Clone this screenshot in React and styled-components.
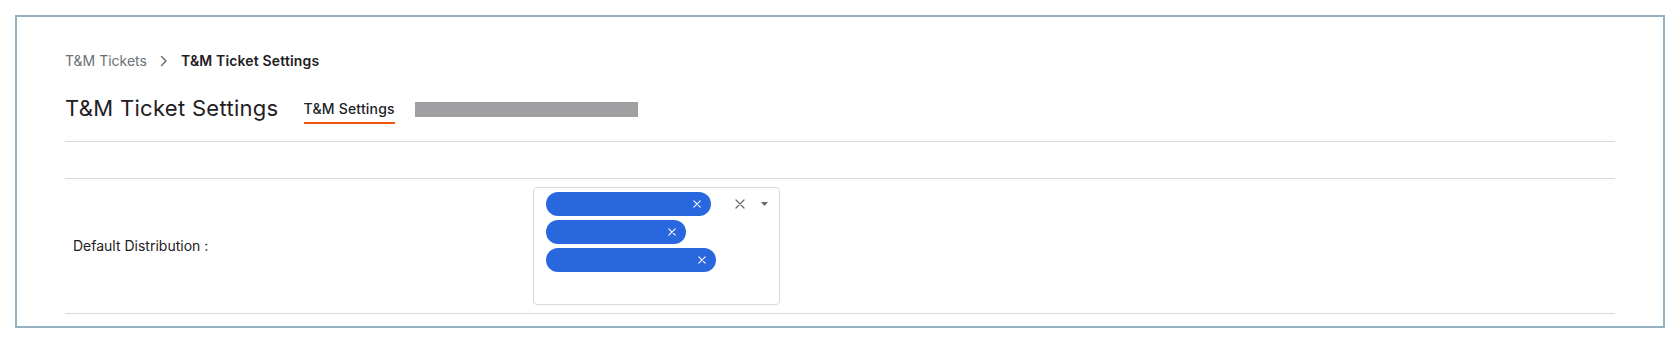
import React from 'react';
import styled, { createGlobalStyle } from 'styled-components';

const GlobalStyle = createGlobalStyle`
  body {
    margin: 0;
    background: #ffffff;
    font-family: Inter, "Noto Sans", "Liberation Sans", sans-serif;
    color: #222326;
  }
`

const Frame = styled.div`
  margin: 15px;
  border: 2px solid #93b1c0;
  padding: 34px 48px 12px 48px;
  height: 313px;
  box-sizing: border-box;
`

const Breadcrumb = styled.div`
  display: flex;
  align-items: center;
  font-size: 14px;
  line-height: 20px;
  height: 20px;
`

const CrumbLink = styled.span`
  color: #697077;
`

const CrumbChevron = styled.span`
  display: flex;
  margin: 0 13px 0 13px;
  color: #697077;
`

const CrumbCurrent = styled.span`
  font-weight: 600;
  color: #1f2023;
  letter-spacing: 0.15px;
`

const HeaderRow = styled.div`
  display: flex;
  align-items: flex-start;
  margin-top: 23px;
`

const Title = styled.h1`
  margin: 0;
  font-size: 22px;
  line-height: 28px;
  font-weight: 400;
  color: #1f2023;
  letter-spacing: 0.3px;
`

const Tab = styled.div`
  margin-left: 25px;
  margin-top: 5px;
  font-size: 14px;
  line-height: 20px;
  font-weight: 500;
  letter-spacing: 0.2px;
  padding-bottom: 3px;
  border-bottom: 2px solid ${props => props.active ? '#f0560d' : 'transparent'};
  color: #222326;
`

const Redacted = styled.div`
  margin-left: 20px;
  margin-top: 8px;
  width: 223px;
  height: 15px;
  background: #a0a0a2;
`

const Table = styled.div`
  margin-top: 17px;
  border-bottom: 1px solid #d9d9d9;
`

const Row = styled.div`
  display: grid;
  grid-template-columns: 468px 1fr;
  align-items: center;
  border-top: 1px solid #d9d9d9;
  min-height: ${props => props.empty ? '36px' : 'auto'};
  padding: ${props => props.empty ? '0' : '8px 0'};
`

const Label = styled.div`
  padding-left: 8px;
  font-size: 14px;
  line-height: 20px;
  color: #1f2023;
`

const Select = styled.div`
  width: 247px;
  height: 118px;
  box-sizing: border-box;
  border: 1px solid #d9d9d9;
  border-radius: 4px;
  padding: 4px 11px 0 12px;
  display: flex;
  align-items: flex-start;
`

const ChipList = styled.div`
  flex: 1;
  display: flex;
  flex-direction: column;
  align-items: flex-start;
  gap: 4px;
`

const Chip = styled.div`
  width: ${props => props.w}px;
  height: 24px;
  border-radius: 12px;
  background: #2967df;
  display: flex;
  align-items: center;
  justify-content: flex-end;
  padding-right: 10px;
  box-sizing: border-box;
`

const Indicators = styled.div`
  display: flex;
  align-items: center;
  height: 24px;
  gap: 16px;
`

const Cross = ({ size, color, width }) => (
  <svg width={size} height={size} viewBox="0 0 10 10">
    <path d="M1 1 L9 9 M9 1 L1 9" stroke={color} strokeWidth={width} strokeLinecap="round" />
  </svg>
)

const Caret = () => (
  <svg width="7" height="4" viewBox="0 0 7 4">
    <path d="M0 0 L7 0 L3.5 4 Z" fill="#666a70" />
  </svg>
)

const Chevron = () => (
  <svg width="8" height="12" viewBox="0 0 8 12">
    <path d="M1.5 1.5 L6 6 L1.5 10.5" stroke="#697077" strokeWidth="1.5" fill="none" strokeLinecap="round" strokeLinejoin="round" />
  </svg>
)

const chips = [165, 140, 170];

const App = () => {
  return (
    <>
      <GlobalStyle />
      <Frame>
        <Breadcrumb>
          <CrumbLink>T&amp;M Tickets</CrumbLink>
          <CrumbChevron><Chevron /></CrumbChevron>
          <CrumbCurrent>T&amp;M Ticket Settings</CrumbCurrent>
        </Breadcrumb>
        <HeaderRow>
          <Title>T&amp;M Ticket Settings</Title>
          <Tab active>T&amp;M Settings</Tab>
          <Redacted />
        </HeaderRow>
        <Table>
          <Row empty />
          <Row>
            <Label>Default Distribution :</Label>
            <Select>
              <ChipList>
                {chips.map((w, i) => (
                  <Chip key={i} w={w}>
                    <Cross size={8} color="#ffffff" width={1.4} />
                  </Chip>
                ))}
              </ChipList>
              <Indicators>
                <Cross size={10} color="#666a70" width={1.2} />
                <Caret />
              </Indicators>
            </Select>
          </Row>
        </Table>
      </Frame>
    </>
  )
}

export default App;
